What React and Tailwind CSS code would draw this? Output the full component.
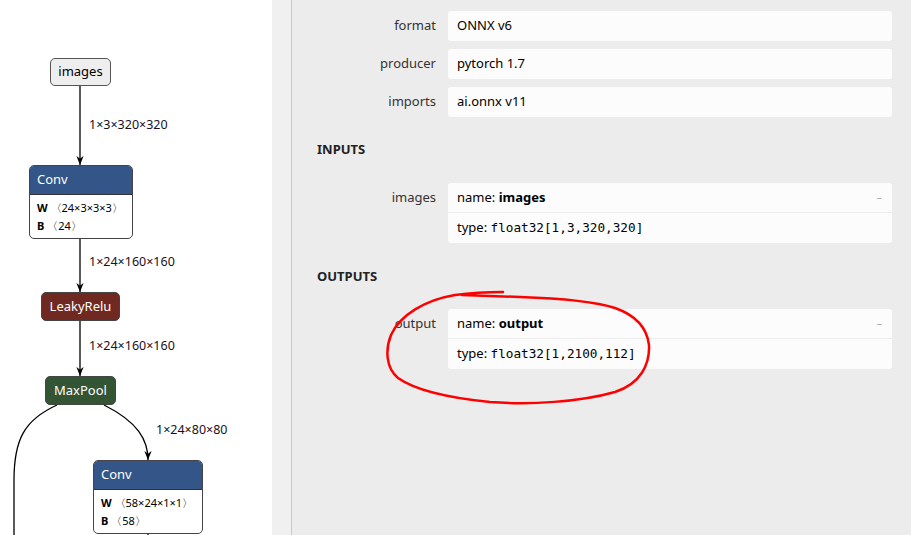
import React from "react";

const font = { fontFamily: '"Noto Sans", "Open Sans", sans-serif' };

function Arrows() {
  return (
    <svg className="absolute inset-0" width="272" height="535">
      <defs>
        <marker id="arr" viewBox="0 0 10 10" refX="10" refY="5" markerWidth="7" markerHeight="7" orient="auto">
          <path d="M0,1 L10,5 L0,9 L3,5 z" fill="#000" />
        </marker>
      </defs>
      <g stroke="#000" strokeWidth="1.3" fill="none">
        <path d="M80,86 L80,165" markerEnd="url(#arr)" />
        <path d="M80,235 L80,292" markerEnd="url(#arr)" />
        <path d="M80,321 L80,376" markerEnd="url(#arr)" />
        <path d="M57,405 C24,420 14,440 14,480 L14,535" />
        <path d="M104,405 C138,422 148,440 148,460" markerEnd="url(#arr)" />
        <path d="M148,530 L148,535" />
      </g>
    </svg>
  );
}

function EdgeLabel({ x, y, children }) {
  return (
    <div className="absolute text-[12.5px] leading-none text-[#1a1020] whitespace-nowrap" style={{ left: x, top: y }}>
      {children}
    </div>
  );
}

function OpNode({ x, y, w, name, color, attrs }) {
  return (
    <div
      className="absolute rounded-[5px] border border-[#444] overflow-hidden bg-white"
      style={{ left: x, top: y, width: w }}
    >
      <div className={`${color} text-white text-[13px] h-[29px] flex items-center px-[7px] border-b border-[#333]`}>{name}</div>
      {attrs && (
        <div className="px-[7px] pt-[4px] pb-[3px] text-[11px] leading-[18px] text-black whitespace-nowrap">
          {attrs.map(([k, v]) => (
            <div key={k}>
              <span className="font-bold">{k}</span> 〈{v}〉
            </div>
          ))}
        </div>
      )}
    </div>
  );
}

function Graph() {
  return (
    <div className="relative w-[272px] h-full bg-white overflow-hidden shrink-0">
      <Arrows />
      <div className="absolute left-[50px] top-[58px] w-[61px] h-[28px] rounded-[5px] border border-[#555] bg-[#eeeeee] flex items-center justify-center text-[13px] text-black">
        images
      </div>
      <EdgeLabel x={89} y={119}>1×3×320×320</EdgeLabel>
      <OpNode x={29} y={165} w={104} name="Conv" color="bg-[#335588]" attrs={[["W", "24×3×3×3"], ["B", "24"]]} />
      <EdgeLabel x={89} y={256}>1×24×160×160</EdgeLabel>
      <div className="absolute left-[41px] top-[292px] w-[79px] h-[29px] rounded-[5px] border border-[#444] bg-[#702921] flex items-center justify-center text-[13px] text-white">
        LeakyRelu
      </div>
      <EdgeLabel x={89} y={340}>1×24×160×160</EdgeLabel>
      <div className="absolute left-[45px] top-[376px] w-[71px] h-[29px] rounded-[5px] border border-[#444] bg-[#335533] flex items-center justify-center text-[13px] text-white">
        MaxPool
      </div>
      <EdgeLabel x={156} y={424}>1×24×80×80</EdgeLabel>
      <OpNode x={93} y={460} w={110} name="Conv" color="bg-[#335588]" attrs={[["W", "58×24×1×1"], ["B", "58"]]} />
    </div>
  );
}

function PropRow({ label, value }) {
  return (
    <div className="flex">
      <div className="w-[144px] text-right text-[13px] text-[#333] h-[30px] flex items-center justify-end">{label}</div>
      <div className="ml-[12px] w-[444px] h-[30px] bg-[#fcfcfc] rounded-[3px] flex items-center px-[9px] text-[13px] text-black">
        {value}
      </div>
    </div>
  );
}

function ArgRow({ label, name, type }) {
  return (
    <div className="flex">
      <div className="w-[144px] text-right text-[13px] text-[#333] h-[30px] flex items-center justify-end">{label}</div>
      <div className="ml-[12px] w-[444px] bg-[#fcfcfc] rounded-[3px] text-[13px] text-black">
        <div className="h-[30px] flex items-center px-[9px] border-b border-[#ececec] relative">
          <span>name:&nbsp;</span>
          <span className="font-bold">{name}</span>
          <span className="absolute right-[10px] top-[6px] text-[#aaa] text-[11px]">–</span>
        </div>
        <div className="h-[30px] flex items-center px-[9px]">
          <span>type:&nbsp;</span>
          <span className="text-[12.7px] font-medium" style={{ fontFamily: '"DejaVu Sans Mono", "Liberation Mono", monospace' }}>
            {type}
          </span>
        </div>
      </div>
    </div>
  );
}

function Sidebar() {
  return (
    <div className="flex h-full flex-1">
      <div className="w-[20px] bg-[#f0f0f0] border-r border-[#c8c8c8] shrink-0" />
      <div className="flex-1 bg-[#ececec] pt-[11px]">
        <div className="flex flex-col gap-[8px]">
          <PropRow label="format" value="ONNX v6" />
          <PropRow label="producer" value="pytorch 1.7" />
          <PropRow label="imports" value="ai.onnx v11" />
        </div>
        <div className="pl-[25px] mt-[23px] text-[13px] font-bold text-[#222] h-[18px] leading-[18px]">INPUTS</div>
        <div className="mt-[25px]">
          <ArgRow label="images" name="images" type="float32[1,3,320,320]" />
        </div>
        <div className="pl-[25px] mt-[24px] text-[13px] font-bold text-[#222] h-[18px] leading-[18px]">OUTPUTS</div>
        <div className="mt-[24px]">
          <ArgRow label="output" name="output" type="float32[1,2100,112]" />
        </div>
      </div>
    </div>
  );
}

export default function App() {
  return (
    <div className="relative w-[911px] h-[535px] flex overflow-hidden" style={font}>
      <Graph />
      <Sidebar />
      <svg className="absolute inset-0 pointer-events-none" width="911" height="535">
        <path
          d="M503,292 C490,292 470,293 455,295 C425,300 400,315 391,335 C385,350 386,368 398,378 C415,390 450,398 490,402 C530,405 580,402 615,392 C640,384 650,365 649,345 C647,328 635,315 615,308 C590,300 550,298 520,297 L462,295"
          stroke="#ff0000"
          strokeWidth="2.5"
          fill="none"
          strokeLinecap="round"
        />
      </svg>
    </div>
  );
}
